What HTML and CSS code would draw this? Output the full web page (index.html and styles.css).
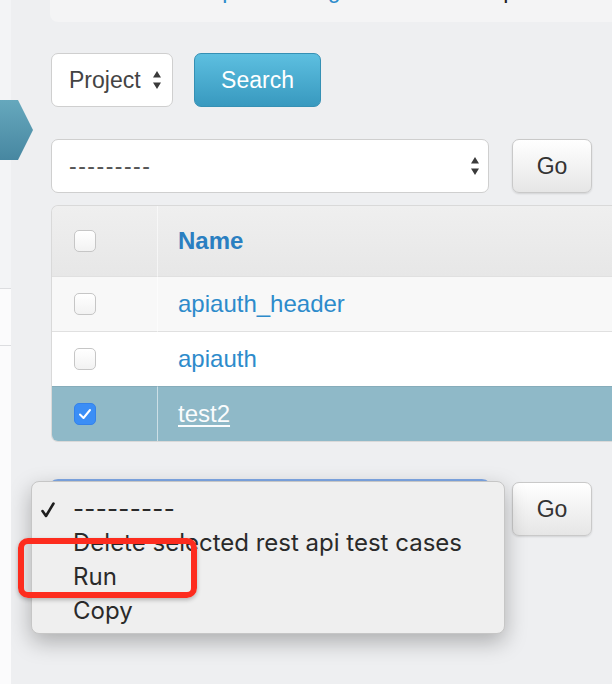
FILE: index.html
```html
<!DOCTYPE html>
<html lang="en">
<head>
<meta charset="utf-8">
<title>Rest api test cases</title>
<link rel="stylesheet" href="styles.css">
</head>
<body>
<div class="app">
  <aside class="sidebar">
    <div class="nav-top"><span class="nav-arrow"></span></div>
    <div class="nav-item"></div>
    <div class="nav-rest"></div>
  </aside>
  <main class="main">
    <div class="topbar">
      <div class="crumbs"><a class="c1">Api</a><a class="c2">Log</a><span class="c3">Help</span></div>
    </div>

    <form class="search-row">
      <div class="select select-sm">
        <span>Project</span>
        <svg class="arrows" width="8" height="18" viewBox="0 0 8 18"><path d="M4 0 L8 6.5 H0 Z M4 18 L0 11.5 H8 Z" fill="#3a3a3a"/></svg>
      </div>
      <button type="button" class="btn btn-search">Search</button>
    </form>

    <div class="action-row">
      <div class="select select-lg">
        <span class="dashes">---------</span>
        <svg class="arrows" width="8" height="18" viewBox="0 0 8 18"><path d="M4 0 L8 6.5 H0 Z M4 18 L0 11.5 H8 Z" fill="#3a3a3a"/></svg>
      </div>
      <button type="button" class="btn btn-go">Go</button>
    </div>

    <table class="results">
      <thead>
        <tr>
          <th class="col-check"><span class="cb"></span></th>
          <th class="col-name">Name</th>
        </tr>
      </thead>
      <tbody>
        <tr class="row-odd">
          <td class="col-check"><span class="cb"></span></td>
          <td class="col-name"><a class="link">apiauth_header</a></td>
        </tr>
        <tr class="row-even">
          <td class="col-check"><span class="cb"></span></td>
          <td class="col-name"><a class="link">apiauth</a></td>
        </tr>
        <tr class="row-selected">
          <td class="col-check"><span class="cb cb-on"><svg width="14" height="12" viewBox="0 0 14 12"><path d="M2 6.5 L5.5 10 L12 2" fill="none" stroke="#fff" stroke-width="2" stroke-linecap="round" stroke-linejoin="round"/></svg></span></td>
          <td class="col-name"><a class="link link-sel">test2</a></td>
        </tr>
      </tbody>
    </table>

    <div class="action-row action-bottom">
      <div class="select select-lg focused">
        <span class="dashes">---------</span>
      </div>
      <button type="button" class="btn btn-go">Go</button>

      <ul class="popup">
        <li><svg class="tick" width="14" height="16" viewBox="0 0 14 16"><path d="M1.5 9 L5 14 L12.5 1.5" fill="none" stroke="#1e1e1e" stroke-width="2.6" stroke-linecap="round" stroke-linejoin="round"/></svg><span class="dashes-menu">---------</span></li>
        <li>Delete selected rest api test cases</li>
        <li>Run</li>
        <li>Copy</li>
      </ul>
      <span class="annot"></span>
    </div>
  </main>
</div>
</body>
</html>
```

FILE: styles.css
```css
* { box-sizing: border-box; }

html, body {
  margin: 0;
  height: 100%;
}

body {
  background: #eeeff1;
  font-family: "Liberation Sans", Arial, sans-serif;
  font-size: 23px;
  color: #333;
  overflow: hidden;
}

.app {
  display: flex;
  min-height: 100vh;
}

/* sidebar */
.sidebar {
  width: 11px;
  flex: none;
  position: relative;
  z-index: 2;
  display: flex;
  flex-direction: column;
}
.nav-top {
  height: 289px;
  background: #f3f4f6;
  border-bottom: 1px solid #dcdde0;
  position: relative;
}
.nav-item {
  height: 57px;
  background: #fbfbfc;
  border-bottom: 1px solid #dcdde0;
}
.nav-rest {
  flex: 1;
  background: #fbfbfc;
}
.nav-arrow {
  position: absolute;
  left: 0;
  top: 100px;
  width: 33px;
  height: 60px;
  background: linear-gradient(#66a8bd, #4787a1);
  clip-path: polygon(0 0, 18px 0, 33px 30px, 18px 60px, 0 60px);
}

/* main */
.main {
  flex: 1;
  min-width: 0;
  padding-left: 40px;
  overflow: hidden;
}

.topbar {
  margin-left: -1px;
  height: 22px;
  background: #f4f4f5;
  border-bottom-left-radius: 8px;
  overflow: hidden;
}
.crumbs {
  display: flex;
  margin-top: -21px;
  line-height: 23px;
  white-space: nowrap;
}
.crumbs a { color: #2d8bcb; }
.crumbs .c1 { margin-left: 157px; }
.crumbs .c2 { margin-left: 62px; }
.crumbs .c3 { margin-left: 128px; color: #222; }

/* controls */
.search-row {
  display: flex;
  gap: 21px;
  margin: 31px 0 0;
}
.action-row {
  display: flex;
  gap: 23px;
  margin-top: 32px;
}

.select {
  display: flex;
  align-items: center;
  justify-content: space-between;
  height: 54px;
  background: #fff;
  border: 1px solid #cfcfcf;
  border-radius: 7px;
  color: #444;
}
.select-sm {
  width: 122px;
  padding: 0 11px 0 17px;
}
.select-lg {
  width: 438px;
  padding: 0 9px 0 17px;
}
.dashes { letter-spacing: 1.5px; color: #555; }
.arrows { flex: none; }

.btn {
  height: 54px;
  border-radius: 7px;
  font: inherit;
  padding: 0;
  cursor: pointer;
}
.btn-search {
  width: 127px;
  color: #fff;
  background: linear-gradient(#5dbfe0, #3899bf);
  border: 1px solid #3590b4;
}
.btn-go {
  width: 80px;
  color: #333;
  background: linear-gradient(#ffffff, #e6e6e6);
  border: 1px solid #c9c9c9;
  box-shadow: 0 1px 2px rgba(0, 0, 0, 0.12);
}

/* table */
.results {
  margin-top: 12px;
  width: 620px;
  font-size: 24px;
  border-collapse: separate;
  border-spacing: 0;
  border: 1px solid #d9d9d9;
  border-right: none;
  border-radius: 7px 0 0 7px;
  overflow: hidden;
}
.results th,
.results td {
  padding: 0;
  text-align: left;
  vertical-align: middle;
}
.results thead tr {
  height: 70px;
  background: linear-gradient(#efefef, #e7e7e7);
}
.results tbody tr { height: 55px; }
.results tbody td { border-top: 1px solid #e0e0e0; }
.col-check {
  width: 106px;
  padding-left: 22px !important;
  border-right: 1px solid rgba(255, 255, 255, 0.55);
}
.col-name {
  padding-left: 20px !important;
}
.results th.col-name {
  color: #2a7fc1;
  font-weight: bold;
}
.row-odd { background: #f8f8f8; }
.row-even { background: #ffffff; }
.row-selected { background: #8fb9c8; }
.results .row-selected td { border-top-color: #86acba; }

.cb {
  display: flex;
  align-items: center;
  justify-content: center;
  width: 22px;
  height: 22px;
  border: 1px solid #c6c6c6;
  border-radius: 5px;
  background: linear-gradient(#ffffff, #f2f2f2);
}
.cb-on {
  background: #3b8ef6;
  border-color: #3482ea;
}

.link {
  color: #2d8bcb;
  text-decoration: none;
}
.link-sel {
  color: #fafcfd;
  text-decoration: underline;
  text-underline-offset: 3px;
}

/* bottom actions with open popup */
.action-bottom {
  position: relative;
  margin-top: 40px;
}
.focused {
  border-color: #6f98da;
  box-shadow: 0 0 0 3px #7fa8e6;
}

.popup {
  position: absolute;
  left: -20px;
  top: -1px;
  width: 474px;
  height: 153px;
  margin: 0;
  padding: 10px 0 0;
  list-style: none;
  background: #efefef;
  border: 1px solid #c6c6c6;
  border-radius: 8px;
  box-shadow: 0 8px 22px rgba(0, 0, 0, 0.28);
  font-family: Inter, "Liberation Sans", sans-serif;
  font-size: 24px;
  color: #2a2a2a;
  z-index: 3;
}
.popup li {
  position: relative;
  height: 34px;
  line-height: 34px;
  padding-left: 41px;
  white-space: nowrap;
}
.tick {
  position: absolute;
  left: 9px;
  top: 10px;
}
.dashes-menu { letter-spacing: 0.3px; }

.annot {
  position: absolute;
  left: -33px;
  top: 56px;
  width: 179px;
  height: 60px;
  border: 6px solid #fd2c1e;
  border-radius: 10px;
  box-shadow: 0 2px 4px rgba(0, 0, 0, 0.25);
  z-index: 4;
}
```
